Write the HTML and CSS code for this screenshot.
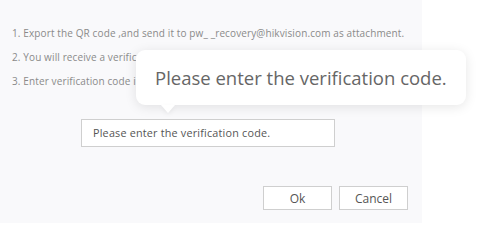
FILE: index.html
```html
<!DOCTYPE html>
<html>
<head>
<meta charset="utf-8">
<link rel="stylesheet" href="styles.css">
</head>
<body>
<div class="page">
  <div class="panel">
    <ol class="steps">
      <li>1. Export the QR code ,and send it to pw_ _recovery@hikvision.com as attachment.</li>
      <li>2. You will receive a verification code in the email.</li>
      <li>3. Enter verification code in the box below.</li>
    </ol>
    <div class="field-row">
      <div class="input">Please enter the verification code.</div>
    </div>
    <div class="actions">
      <button class="btn">Ok</button>
      <button class="btn">Cancel</button>
    </div>
    <div class="tooltip">Please enter the verification code.</div>
  </div>
</div>
</body>
</html>
```
FILE: styles.css
```css
html, body {
  margin: 0;
  padding: 0;
  background: #ffffff;
}
body {
  font-family: "Open Sans", "Noto Sans", sans-serif;
  width: 490px;
  height: 223px;
  overflow: hidden;
}
.page {
  display: flex;
  height: 223px;
}
.panel {
  position: relative;
  width: 422px;
  height: 223px;
  background: #f9f9fb;
  box-sizing: border-box;
  padding: 26px 0 0 12px;
}
.steps {
  list-style: none;
  margin: 0;
  padding: 0;
  display: flex;
  flex-direction: column;
  gap: 10px;
}
.steps li {
  font-size: 10px;
  letter-spacing: 0.12px;
  line-height: 14px;
  color: #8a8a8a;
  white-space: nowrap;
}
.field-row {
  margin: 31px 0 0 69px;
}
.input {
  width: 254px;
  height: 28px;
  box-sizing: border-box;
  border: 1px solid #cfcfcf;
  background: #fff;
  padding-left: 11px;
  font-size: 10.8px;
  letter-spacing: 0.2px;
  line-height: 26px;
  color: #555;
}
.actions {
  display: flex;
  gap: 7px;
  margin: 39px 0 0 251px;
}
.btn {
  width: 69px;
  height: 24px;
  box-sizing: border-box;
  border: 1px solid #cfcfcf;
  background: #fff;
  font-family: "Open Sans", "Noto Sans", sans-serif;
  font-size: 12px;
  color: #555;
  padding: 0;
}
.tooltip {
  position: absolute;
  left: 136px;
  top: 50px;
  width: 330px;
  height: 55px;
  box-sizing: border-box;
  background: #fff;
  border-radius: 9px;
  box-shadow: 0 2px 12px rgba(0, 0, 0, 0.10);
  padding-left: 19px;
  font-size: 18.5px;
  line-height: 55px;
  color: #666;
  white-space: nowrap;
}
.tooltip::after {
  content: "";
  position: absolute;
  left: 25px;
  bottom: -8px;
  width: 0;
  height: 0;
  border-left: 7px solid transparent;
  border-right: 7px solid transparent;
  border-top: 8px solid #fff;
  filter: drop-shadow(0 2px 2px rgba(0, 0, 0, 0.05));
}
```
